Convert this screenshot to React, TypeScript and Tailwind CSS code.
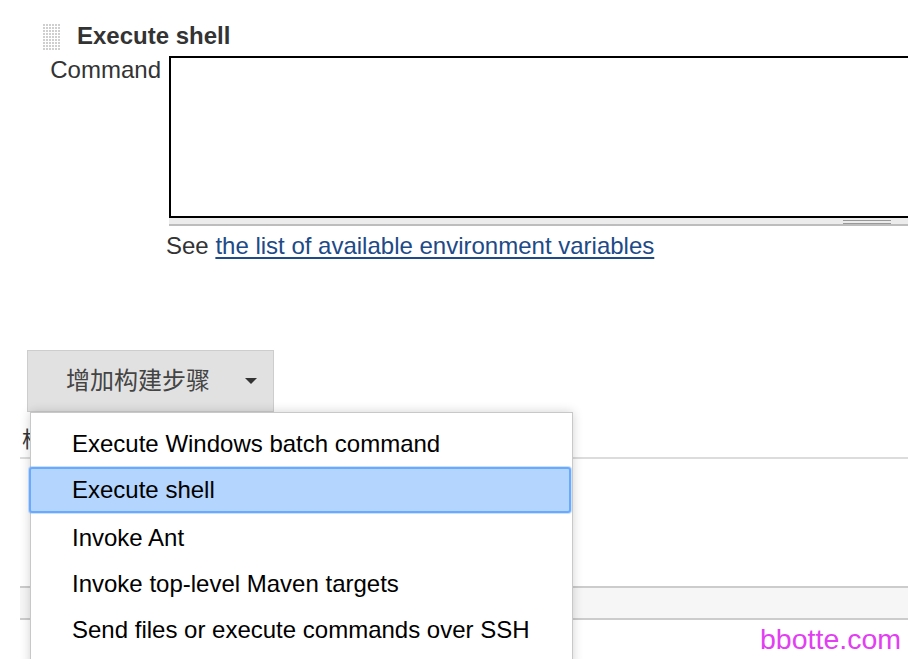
import React from "react"

const menuItems = [
    "Execute Windows batch command",
    "Execute shell",
    "Invoke Ant",
    "Invoke top-level Maven targets",
    "Send files or execute commands over SSH",
]

const Grip = () => (
    <svg width="18" height="26" viewBox="0 0 18 26" className="mt-[2px] shrink-0">
        <defs>
            <pattern id="dots" width="3" height="3" patternUnits="userSpaceOnUse">
                <rect x="0" y="0" width="2" height="2" fill="#cfcfcf" />
            </pattern>
        </defs>
        <rect x="0" y="0" width="18" height="26" fill="url(#dots)" />
    </svg>
)

const App: React.FC = () => {
    return (
        <div className="relative w-[908px] h-[659px] overflow-hidden bg-white font-['Liberation_Sans','Noto_Sans_CJK_SC',sans-serif] text-[24px] leading-[28px] text-[#333]">
            {/* Step header */}
            <div className="flex items-start pl-[43px] pt-[22px]">
                <Grip />
                <span className="ml-[16px] font-bold">Execute shell</span>
            </div>

            {/* Command row */}
            <div className="flex items-start mt-[6px]">
                <div className="w-[161px] shrink-0 text-right">Command</div>
                <div className="ml-[8px] w-[760px] shrink-0">
                    <div className="h-[162px] border-2 border-black bg-white"></div>
                    <div className="h-[8px] bg-[#ececec] border-b-2 border-[#bdbdbd] pl-[674px] pt-[2px]">
                        <div className="w-[48px] h-[4px] border-y border-[#999]"></div>
                    </div>
                </div>
            </div>

            <div className="mt-[6px] pl-[166px]">
                See{" "}
                <a href="#" className="text-[#204a87] underline decoration-[2px] underline-offset-[3px]">
                    the list of available environment variables
                </a>
            </div>

            {/* Add build step button + open menu */}
            <div className="relative mt-[90px] pl-[27px]">
                <button className="flex items-center w-[247px] h-[62px] pl-[38px] bg-[#e1e1e1] border border-[#cdcdcd] text-[#444] text-[24px]">
                    <span>增加构建步骤</span>
                    <svg width="12" height="6" viewBox="0 0 12 6" className="ml-[35px]">
                        <polygon points="0,0 12,0 6,6" fill="#333" />
                    </svg>
                </button>

                <div className="absolute z-10 left-[30px] top-[62px] w-[543px] h-[260px] bg-white border border-[#c8c8c8] shadow-[0_0_10px_rgba(0,0,0,0.18)] pt-[8px] text-black">
                    {menuItems.map((item) =>
                        item === "Execute shell" ? (
                            <div
                                key={item}
                                className="-ml-[2px] mr-[1px] mb-[2px] h-[46px] pl-[41px] leading-[42px] bg-[#b4d5fd] border-2 border-[#69aaff] rounded-[3px] shadow-[0_0_0_1px_rgba(105,170,255,0.35)]"
                            >
                                {item}
                            </div>
                        ) : (
                            <div key={item} className="h-[46px] pl-[41px] leading-[46px]">
                                {item}
                            </div>
                        )
                    )}
                </div>
            </div>

            {/* Section behind the menu */}
            <div className="ml-[20px] mt-[14px] pl-[2px] pb-[3px] border-b-2 border-[#dcdcdc] text-[22px]">
                <span className="inline-block w-[9px] overflow-hidden whitespace-nowrap align-top">构建后操作</span>
            </div>

            <div className="ml-[20px] mt-[127px] h-[34px] bg-[#f6f6f6] border-y-2 border-[#cccccc]"></div>

            <div className="mt-[3px] pr-[7px] text-right text-[28.5px] leading-[32px] text-[#e23ef2]">bbotte.com</div>
        </div>
    )
}

export default App
